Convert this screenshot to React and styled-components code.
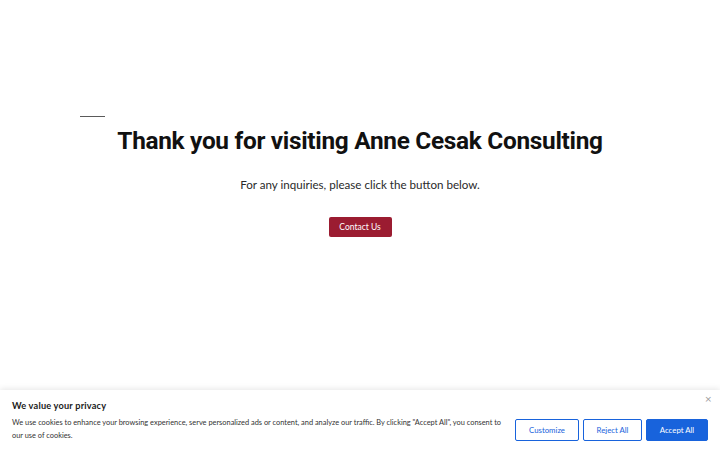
import React from 'react';
import styled, { createGlobalStyle } from 'styled-components';

const GlobalStyle = createGlobalStyle`
	html, body {
		margin: 0;
		padding: 0;
		background: #ffffff;
	}
	body {
		font-family: 'Inter', 'Liberation Sans', sans-serif;
		color: #1a1a1a;
	}
	#root {
		min-height: 450px;
	}
`;

const Page = styled.div`
	width: 720px;
	height: 450px;
	position: relative;
	overflow: hidden;
`;

const Hero = styled.section`
	display: flex;
	flex-direction: column;
	align-items: center;
	padding-top: 116px;
`;

const Rule = styled.div`
	align-self: flex-start;
	margin-left: 80px;
	width: 25px;
	height: 1px;
	background: #5a5a5a;
`;

const Title = styled.h1`
	margin: 8px 0 0;
	font-family: 'Roboto', 'Liberation Sans', sans-serif;
	font-weight: 700;
	font-size: 24.4px;
	line-height: 32px;
	letter-spacing: -0.3px;
	color: #111111;
`;

const Lead = styled.p`
	margin: 19px 0 0;
	font-family: 'Lato', 'Liberation Sans', sans-serif;
	font-size: 11.6px;
	line-height: 18px;
	color: #2a2a2a;
`;

const ContactButton = styled.button`
	margin-top: 23px;
	width: 63px;
	height: 20px;
	padding: 0;
	border: none;
	border-radius: 2px;
	background: #9b1c31;
	color: #ffffff;
	font-family: 'Lato', 'Liberation Sans', sans-serif;
	font-size: 8.5px;
	cursor: pointer;
`;

const Banner = styled.div`
	position: absolute;
	left: 0;
	right: 0;
	bottom: 0;
	height: 60px;
	background: #ffffff;
	box-shadow: 0 -1px 6px rgba(0, 0, 0, 0.1);
	padding: 10px 12px 0;
	box-sizing: border-box;
`;

const BannerTitle = styled.h2`
	margin: 0;
	font-family: 'Lato', 'Liberation Sans', sans-serif;
	font-size: 9.2px;
	font-weight: 700;
	line-height: 12px;
	color: #1a1a1a;
	letter-spacing: 0.2px;
`;

const BannerRow = styled.div`
	display: flex;
	align-items: center;
	margin-top: 5px;
`;

const BannerText = styled.p`
	margin: 0;
	width: 495px;
	font-family: 'Lato', 'Liberation Sans', sans-serif;
	font-size: 7.4px;
	line-height: 12.5px;
	color: #333333;
`;

const Actions = styled.div`
	display: flex;
	gap: 4px;
	margin-left: auto;
`;

const ActionButton = styled.button`
	height: 22px;
	width: ${({ wide }) => wide}px;
	padding: 0;
	border-radius: 2px;
	border: 1px solid #1863dc;
	background: ${({ primary }) => (primary ? '#1863dc' : '#ffffff')};
	color: ${({ primary }) => (primary ? '#ffffff' : '#1863dc')};
	font-family: 'Lato', 'Liberation Sans', sans-serif;
	font-size: 7.8px;
	cursor: pointer;
`;

const CloseIcon = styled.span`
	position: absolute;
	top: 4px;
	right: 8px;
	font-size: 9px;
	color: #9a9a9a;
	font-family: 'DejaVu Sans', sans-serif;
`;

const App = () => (
	<Page>
		<GlobalStyle />
		<Hero>
			<Rule />
			<Title>Thank you for visiting Anne Cesak Consulting</Title>
			<Lead>For any inquiries, please click the button below.</Lead>
			<ContactButton>Contact Us</ContactButton>
		</Hero>
		<Banner>
			<CloseIcon>×</CloseIcon>
			<BannerTitle>We value your privacy</BannerTitle>
			<BannerRow>
				<BannerText>
					We use cookies to enhance your browsing experience, serve personalized ads or content, and analyze our traffic. By clicking "Accept All", you consent to our use of cookies.
				</BannerText>
				<Actions>
					<ActionButton wide={64}>Customize</ActionButton>
					<ActionButton wide={59}>Reject All</ActionButton>
					<ActionButton wide={62} primary>Accept All</ActionButton>
				</Actions>
			</BannerRow>
		</Banner>
	</Page>
);

export default App;
